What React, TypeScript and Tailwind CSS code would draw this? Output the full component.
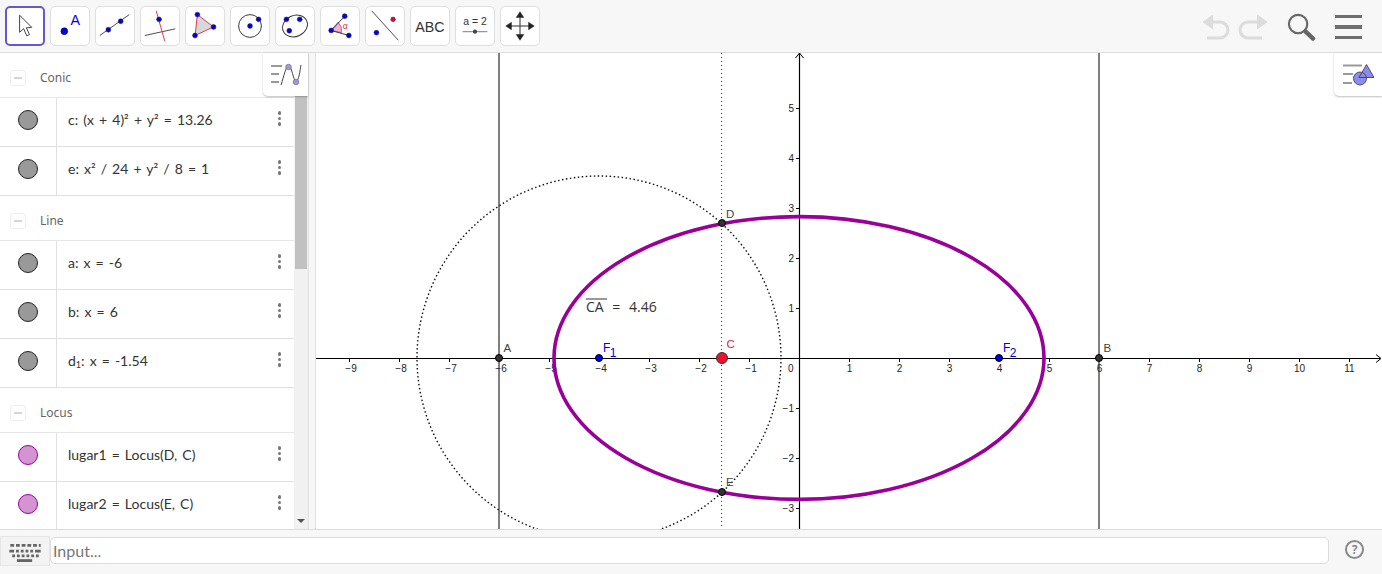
// GeoGebra-style graphing view: toolbar, algebra list, graphics canvas, input bar
import React from 'react';

const Blue = ({ x, y, r = 2.6 }: { x: number; y: number; r?: number }) => (
  <circle cx={x} cy={y} r={r} fill="#0000e6" stroke="#222" strokeWidth={0.5} />
);

const toolIcons: React.ReactNode[] = [
  <path key="move" d="M14 8 L14 27 L18.5 23 L22 31 L25 29.5 L21.5 22 L27.5 21.5 Z" fill="#fff" stroke="#444" strokeWidth={1.1} strokeLinejoin="round" />,
  <g key="point">
    <circle cx={14} cy={25.5} r={3.6} fill="#0000e6" stroke="#111" strokeWidth={0.6} />
    <text x={20.5} y={19} fontSize={15} fill="#0000e6" fontFamily="'Liberation Sans', sans-serif">A</text>
  </g>,
  <g key="line">
    <line x1={4} y1={30} x2={35} y2={8} stroke="#444" strokeWidth={1} />
    <Blue x={13} y={24} /><Blue x={26} y={15} />
  </g>,
  <g key="perp">
    <line x1={4} y1={30} x2={36} y2={23} stroke="#444" strokeWidth={1} />
    <line x1={16} y1={4} x2={25} y2={36} stroke="#e0324b" strokeWidth={1} />
    <Blue x={19} y={13} />
  </g>,
  <g key="polygon">
    <polygon points="12,8 29,21 9.500,30" fill="#d8d8d8" stroke="#e0324b" strokeWidth={1} />
    <Blue x={12} y={8} /><Blue x={29} y={21} /><Blue x={9.500} y={30} />
  </g>,
  <g key="circle">
    <circle cx={20} cy={20} r={12} fill="none" stroke="#333" strokeWidth={1} />
    <Blue x={20} y={20} /><Blue x={29} y={13} />
  </g>,
  <g key="ellipse">
    <ellipse cx={20} cy={20} rx={13.500} ry={11} fill="none" stroke="#333" strokeWidth={1} transform="rotate(-25 20 20)" />
    <Blue x={11} y={13} /><Blue x={25} y={13} /><Blue x={14} y={25} />
  </g>,
  <g key="angle">
    <path d="M10.700 24.700 L18 16 A12 12 0 0 1 21.500 27 Z" fill="#eab6d8" stroke="#e0324b" strokeWidth={0.8} />
    <line x1={10.700} y1={24.700} x2={25} y2={9.700} stroke="#333" strokeWidth={1} />
    <line x1={10.700} y1={24.700} x2={29.300} y2={30} stroke="#333" strokeWidth={1} />
    <text x={23} y={23} fontSize={9} fill="#e0324b" fontFamily="'Liberation Sans', sans-serif">α</text>
    <Blue x={10.700} y={24.700} /><Blue x={25} y={9.700} /><Blue x={29.300} y={30} />
  </g>,
  <g key="reflect">
    <line x1={6} y1={4} x2={34} y2={35} stroke="#444" strokeWidth={1} />
    <circle cx={28.500} cy={13} r={2.4} fill="#e6002e" stroke="#222" strokeWidth={0.5} />
    <Blue x={11} y={27} />
  </g>,
  <text key="abc" x={20} y={26} fontSize={15} textAnchor="middle" fill="#333" fontFamily="'Liberation Sans', sans-serif">ABC</text>,
  <g key="slider">
    <text x={20} y={19} fontSize={11} textAnchor="middle" fill="#333" fontFamily="'Liberation Sans', sans-serif">a = 2</text>
    <line x1={7} y1={26} x2={33} y2={26} stroke="#777" strokeWidth={1} />
    <circle cx={20} cy={26} r={2.2} fill="#444" />
  </g>,
  <g key="pan" fill="#222" stroke="#222">
    <line x1={20} y1={10} x2={20} y2={30} strokeWidth={1} />
    <line x1={10} y1={20} x2={30} y2={20} strokeWidth={1} />
    <polygon points="20,5 16,11 24,11" strokeWidth={0.5} />
    <polygon points="20,35 16,29 24,29" strokeWidth={0.5} />
    <polygon points="5,20 11,16 11,24" strokeWidth={0.5} />
    <polygon points="35,20 29,16 29,24" strokeWidth={0.5} />
  </g>,
];

type Row = { kind: 'header'; label: string } | { kind: 'item'; text: React.ReactNode; purple?: boolean };

const rows: Row[] = [
  { kind: 'header', label: 'Conic' },
  { kind: 'item', text: 'c: (x + 4)² + y² = 13.26' },
  { kind: 'item', text: 'e: x² / 24 + y² / 8 = 1' },
  { kind: 'header', label: 'Line' },
  { kind: 'item', text: 'a: x = -6' },
  { kind: 'item', text: 'b: x = 6' },
  { kind: 'item', text: <>d<sub className="text-[9px]">1</sub>: x = -1.54</> },
  { kind: 'header', label: 'Locus' },
  { kind: 'item', text: 'lugar1 = Locus(D, C)', purple: true },
  { kind: 'item', text: 'lugar2 = Locus(E, C)', purple: true },
];

const xLabels = [-9, -8, -7, -6, -5, -4, -3, -2, -1, 1, 2, 3, 4, 5, 6, 7, 8, 9, 10, 11];
const yLabels = [-3, -2, -1, 1, 2, 3, 4, 5];
const OX = 483; // origin inside the canvas
const OY = 305;
const labelFont = "'Liberation Sans', Arial, sans-serif";

function Graphics() {
  return (
    <svg className="block h-full w-full" viewBox="0 0 1066 476">
      <line x1={183} y1={0} x2={183} y2={476} stroke="#808080" strokeWidth={2} />
      <line x1={783} y1={0} x2={783} y2={476} stroke="#808080" strokeWidth={2} />
      <line x1={405.5} y1={0} x2={405.5} y2={476} stroke="#333" strokeWidth={1} strokeDasharray="1 3" />
      <circle cx={283} cy={OY} r={182} fill="none" stroke="#111" strokeWidth={1.4} strokeDasharray="1.5 2.5" />

      {/* ejes */}
      <line x1={0} y1={OY + 0.5} x2={1064} y2={OY + 0.5} stroke="#000" strokeWidth={1.2} />
      <line x1={OX + 0.5} y1={0} x2={OX + 0.5} y2={476} stroke="#000" strokeWidth={1.2} />
      <path d="M1060 301.500 L1065 305.500 L1060 309.500" fill="none" stroke="#000" strokeWidth={1} />
      <path d="M479.500 5 L483.500 0 L487.500 5" fill="none" stroke="#000" strokeWidth={1} />
      {xLabels.map((n) => (
        <g key={n}>
          <line x1={OX + n * 50 + 0.5} y1={OY} x2={OX + n * 50 + 0.5} y2={OY + 4} stroke="#000" />
          <text x={OX + n * 50 + (n < 0 ? 2 : 0.5)} y={OY + 14} fontSize={10} textAnchor="middle" fill="#222" fontFamily={labelFont}>
            {n < 0 ? `−${-n}` : n}
          </text>
        </g>
      ))}
      {yLabels.map((n) => (
        <g key={n}>
          <line x1={OX - 3} y1={OY - n * 50 + 0.5} x2={OX} y2={OY - n * 50 + 0.5} stroke="#000" />
          <text x={OX - 5} y={OY - n * 50 + 3.500} fontSize={10} textAnchor="end" fill="#222" fontFamily={labelFont}>
            {n < 0 ? `−${-n}` : n}
          </text>
        </g>
      ))}
      <text x={472} y={319} fontSize={10} fill="#222" fontFamily={labelFont}>0</text>

      <ellipse cx={OX} cy={OY} rx={245} ry={141.4} fill="none" stroke="#990099" strokeWidth={3.6} />

      <line x1={270} y1={246} x2={291} y2={246} stroke="#333" strokeWidth={1} />
      <text x={270} y={259} fontSize={14} fill="#333" wordSpacing={5} fontFamily="'Open Sans', sans-serif">CA = 4.46</text>

      <circle cx={183} cy={OY} r={3.5} fill="#333" stroke="#000" />
      <circle cx={783} cy={OY} r={3.5} fill="#333" stroke="#000" />
      <circle cx={406} cy={170} r={3.5} fill="#333" stroke="#000" />
      <circle cx={406} cy={439} r={3.5} fill="#333" stroke="#000" />
      <circle cx={283} cy={OY} r={3.5} fill="#0000e6" stroke="#000" />
      <circle cx={683} cy={OY} r={3.5} fill="#0000e6" stroke="#000" />
      <circle cx={406} cy={OY} r={5.5} fill="#f00f2d" stroke="#333" />

      <g fontSize={11.5} fill="#444" fontFamily={labelFont}>
        <text x={187.5} y={298.7}>A</text>
        <text x={787.5} y={298.7}>B</text>
        <text x={410} y={165}>D</text>
        <text x={410} y={433}>E</text>
        <text x={410.5} y={295.3} fill="#e0203c">C</text>
      </g>
      <g fontSize={12} fill="#0000e6" fontFamily={labelFont}>
        <text x={287} y={298.7}>F<tspan dx={-0.5} dy={5}>1</tspan></text>
        <text x={687} y={298.7}>F<tspan dx={-0.5} dy={5}>2</tspan></text>
      </g>
    </svg>
  );
}

export default function App() {
  return (
    <div className="flex h-[574px] w-[1382px] flex-col overflow-hidden bg-white font-['Noto_Sans',sans-serif]">
      {/* toolbar */}
      <div className="flex h-[53px] shrink-0 items-start border-b border-[#dcdcdc] bg-[#f7f7f7] pl-[5px] pt-[6px]">
        <div className="flex gap-[5px]">
          {toolIcons.map((icon, i) => (
            <button
              key={i}
              className={
                i === 0
                  ? 'h-10 w-10 rounded-[5px] border-2 border-[#6557d2] bg-white'
                  : 'h-10 w-10 rounded-[5px] border border-[#dfdfdf] bg-white'
              }
            >
              <svg viewBox="0 0 40 40" className="h-full w-full">{icon}</svg>
            </button>
          ))}
        </div>
        <div className="ml-auto flex h-[41px] items-center gap-[19px] pr-5 pt-[1px]">
          <svg width="66" height="25" viewBox="0 0 66 25" fill="none" stroke="#dcdcdc" strokeWidth="3">
            <path d="M4 7 H18 A8 8 0 0 1 18 23 H5" />
            <path d="M11 0 L1 7 L11 14" fill="#dcdcdc" strokeWidth="1" />
            <path d="M62 7 H46 A8 8 0 0 0 46 23 H60" />
            <path d="M55 0 L65 7 L55 14" fill="#dcdcdc" strokeWidth="1" />
          </svg>
          <svg width="29" height="29" viewBox="0 0 30 30" fill="none" stroke="#666">
            <circle cx="11.500" cy="11.500" r="9.500" strokeWidth="2.2" />
            <line x1="19" y1="19" x2="27" y2="26.500" strokeWidth="4.500" strokeLinecap="round" />
          </svg>
          <div className="flex w-[27px] flex-col gap-[7px]">
            <div className="h-[3.500px] bg-[#6e6e6e]" />
            <div className="h-[3.500px] bg-[#6e6e6e]" />
            <div className="h-[3.500px] bg-[#6e6e6e]" />
          </div>
        </div>
      </div>

      {/* main */}
      <div className="relative flex min-h-0 flex-1">
        <div className="flex w-[308px] shrink-0">
          <div className="w-[294px] shrink-0 overflow-hidden">
            {rows.map((row, i) =>
              row.kind === 'header' ? (
                <div key={i} className="flex h-[45px] items-center border-b border-[#e6e6e6] pl-[10px] pt-[5px]">
                  <div className="flex h-4 w-4 items-center justify-center rounded-[3px] border border-[#eeeeee]">
                    <div className="h-[2px] w-2 bg-[#d5d5d5]" />
                  </div>
                  <span className="ml-[14px] text-xs text-[#666]">{row.label}</span>
                </div>
              ) : (
                <div key={i} className="flex h-[49px] items-center border-b border-[#e0e0e0]">
                  <div className="flex h-full w-[57px] shrink-0 items-center justify-center border-r border-[#e0e0e0] pb-1">
                    <div
                      className={
                        row.purple
                          ? 'h-5 w-5 rounded-full border border-[#990099] bg-[#d494d4]'
                          : 'h-5 w-5 rounded-full border border-[#222] bg-[#999999]'
                      }
                    />
                  </div>
                  <span className="ml-[11px] pb-1 font-['Lato',sans-serif] text-sm text-[#333] [word-spacing:1.5px]">{row.text}</span>
                  <div className="ml-auto mr-[13px] flex flex-col gap-[2px] pb-[7px]">
                    <div className="h-[3.500px] w-[3.500px] rounded-full bg-[#777]" />
                    <div className="h-[3.500px] w-[3.500px] rounded-full bg-[#777]" />
                    <div className="h-[3.500px] w-[3.500px] rounded-full bg-[#777]" />
                  </div>
                </div>
              ),
            )}
          </div>
          {/* scrollbar */}
          <div className="relative flex w-[14px] flex-col bg-[#f1f1f1]">
            <div className="mx-[1px] h-[216px] bg-[#c1c1c1]" />
            <div className="mt-auto flex h-[17px] items-center justify-center">
              <div className="border-x-[4px] border-t-[4px] border-x-transparent border-t-[#505050]" />
            </div>
          </div>
        </div>
        <div className="w-2 shrink-0 border-x border-[#e0e0e0] bg-[#f7f7f7]" />
        <div className="min-w-0 flex-1">
          <Graphics />
        </div>

        {/* panel toggles */}
        <div className="absolute left-[263px] top-0 flex h-[43px] w-[45px] items-center justify-center rounded-bl-[5px] bg-white shadow-[0_1px_2px_rgba(0,0,0,0.25)]">
          <svg width="32" height="26" viewBox="0 0 32 26" fill="none">
            <path d="M1 4 H12 M1 12 H9 M1 20 H9" stroke="#999" strokeWidth="2" />
            <path d="M11 23 C14 14 16 3 19 4 C22 5 23 18 26 19 C29 19 30 8 31 3" stroke="#444" strokeWidth="1" />
            <circle cx="18.500" cy="5" r="2.800" fill="#9a9ae0" stroke="#555" strokeWidth="0.5" />
            <circle cx="26" cy="20" r="2.800" fill="#9a9ae0" stroke="#555" strokeWidth="0.5" />
          </svg>
        </div>
        <div className="absolute right-0 top-0 flex h-[43px] w-[48px] items-center justify-center rounded-bl-[5px] bg-white shadow-[0_1px_2px_rgba(0,0,0,0.25)]">
          <svg width="32" height="26" viewBox="0 0 32 26">
            <path d="M1 3.500 H20 M1 12 H11 M1 21 H10" stroke="#999" strokeWidth="2" />
            <polygon points="24.500,2.500 32,15.500 17,15.500" fill="#8c8cf0" />
            <circle cx="18" cy="16.500" r="6.500" fill="#8c8cf0" />
            <polygon points="24.500,2.500 32,15.500 17,15.500" fill="none" stroke="#444" strokeWidth="0.9" />
            <circle cx="18" cy="16.500" r="6.500" fill="none" stroke="#444" strokeWidth="0.9" />
          </svg>
        </div>
      </div>

      {/* input bar */}
      <div className="flex h-[45px] shrink-0 items-start border-t border-[#dcdcdc] bg-[#f7f7f7]">
        <div className="mt-[6px] flex h-[30px] w-[50px] shrink-0 items-center justify-center border border-[#e6e6e6] bg-[#f3f3f3] pt-[2px]">
          <svg width="33" height="19" viewBox="0 0 34 20" fill="#666">
            <path d="M1 1 h4 v3 h-4z M7 1 h4 v3 h-4z M13 1 h4 v3 h-4z M19 1 h4 v3 h-4z M25 1 h4 v3 h-4z M31 1 h2 v3 h-2z" />
            <path d="M0 7 h5 v3 h-5z M7 7 h3 v3 h-3z M12 7 h3 v3 h-3z M17 7 h3 v3 h-3z M22 7 h3 v3 h-3z M27 7 h6 v3 h-6z" />
            <path d="M3 12 h3 v3 h-3z M8 12 h3 v3 h-3z M13 12 h3 v3 h-3z M18 12 h3 v3 h-3z M23 12 h3 v3 h-3z M28 12 h3 v3 h-3z" />
            <path d="M8 17 h16 v3 h-16z" />
          </svg>
        </div>
        <div className="mt-[7px] flex h-[27px] min-w-0 flex-1 items-center rounded-[5px] border border-[#dcdcdc] bg-white pl-[2px] font-['Lato',sans-serif] text-base text-[#777]">
          Input...
        </div>
        <div className="ml-4 mr-[18px] mt-[10px] flex h-[19px] w-[19px] shrink-0 items-center justify-center rounded-full border-2 border-[#8a8a8a] text-xs font-bold text-[#8a8a8a]">
          ?
        </div>
      </div>
    </div>
  );
}
